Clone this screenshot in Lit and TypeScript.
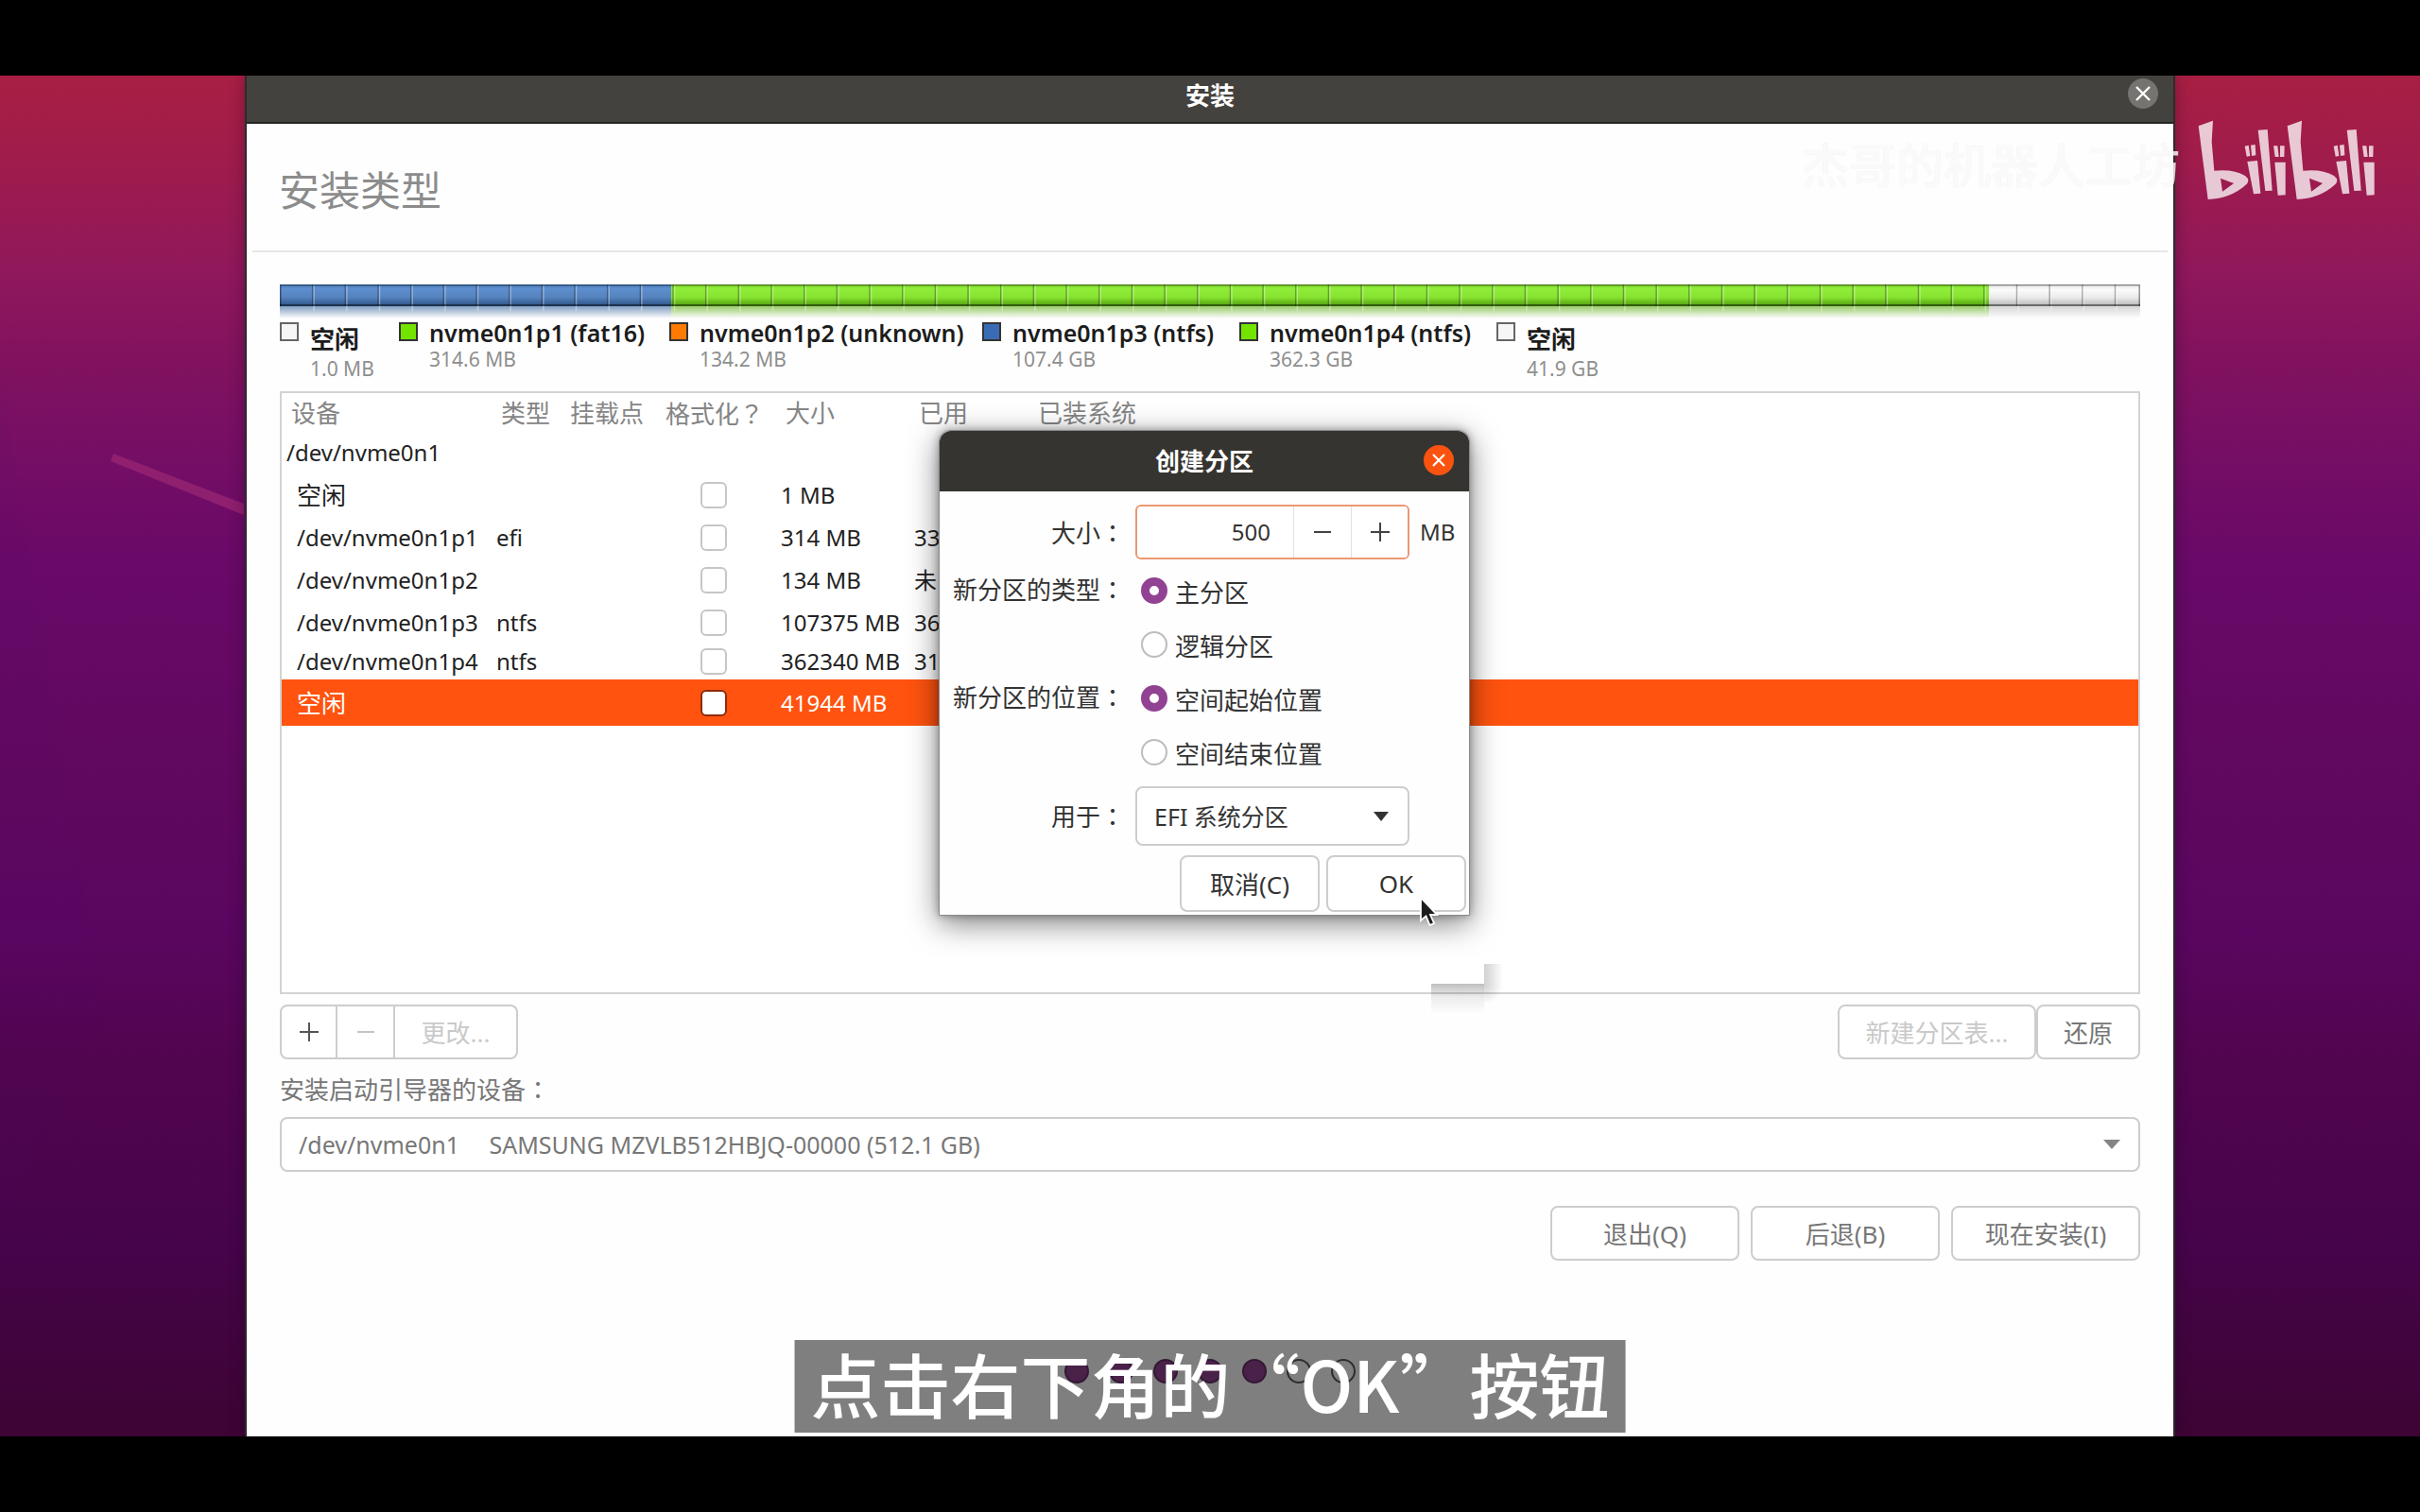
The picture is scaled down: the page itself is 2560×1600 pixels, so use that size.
import { LitElement, html, css, svg } from "lit";
import { customElement, state } from "lit/decorators.js";
import { classMap } from "lit/directives/class-map.js";

interface LegendEntry { name: string; size: string; tone: string; cjk?: boolean; }
interface Row { device: string; type?: string; size?: string; used?: string; kind: string; cjk?: boolean; }

const LEGEND: LegendEntry[] = [
  { name: "空闲", size: "1.0 MB", tone: "free", cjk: true },
  { name: "nvme0n1p1 (fat16)", size: "314.6 MB", tone: "green" },
  { name: "nvme0n1p2 (unknown)", size: "134.2 MB", tone: "orange" },
  { name: "nvme0n1p3 (ntfs)", size: "107.4 GB", tone: "blue" },
  { name: "nvme0n1p4 (ntfs)", size: "362.3 GB", tone: "green" },
  { name: "空闲", size: "41.9 GB", tone: "free", cjk: true },
];

const ROWS: Row[] = [
  { device: "/dev/nvme0n1", kind: "disk" },
  { device: "空闲", size: "1 MB", kind: "part", cjk: true },
  { device: "/dev/nvme0n1p1", type: "efi", size: "314 MB", used: "33", kind: "part" },
  { device: "/dev/nvme0n1p2", size: "134 MB", used: "未", kind: "part" },
  { device: "/dev/nvme0n1p3", type: "ntfs", size: "107375 MB", used: "36", kind: "part" },
  { device: "/dev/nvme0n1p4", type: "ntfs", size: "362340 MB", used: "31", kind: "part tight" },
  { device: "空闲", size: "41944 MB", kind: "part selected", cjk: true },
];

const base = css`
  :host {
    --latin: "Noto Sans", "Open Sans";
    --cjk: "Noto Sans CJK SC";
    font-family: var(--latin), var(--cjk), sans-serif;
    font-size: 24px;
    color: #333;
  }
  *, *::before, *::after { box-sizing: border-box; }
  .cjk { font-size: 26px; }
  .mark { font-family: "Noto Sans CJK TC", sans-serif; }
  button, input, select { font: inherit; color: inherit; margin: 0; }
  button, select {
    height: 58px;
    border: 2px solid #cdcdcd;
    border-radius: 8px;
    background: #fff;
    padding: 0;
  }
  button { font-size: 26px; }
  select { appearance: none; width: 100%; padding: 0 18px; display: block; font-size: 25px; }
  .combo { display: grid; align-items: center; }
  .combo > * { grid-area: 1 / 1; }
  .combo > svg { justify-self: end; margin-right: 21px; pointer-events: none; }
`;

/* Full-width punctuation centred in its em box. */
const mark = (text: string) => html`<span class="mark" lang="zh-TW">${text}</span>`;

@customElement("partition-bar")
export class PartitionBar extends LitElement {
  static styles = css`
    :host { display: block; }
    svg { display: block; width: 100%; height: 36px; }
  `;
  render() {
    const ticks = Array.from({ length: 56 }, (_, i) => (i + 1) * 34.67);
    return html`<svg viewBox="0 0 1968 36" preserveAspectRatio="none" aria-hidden="true">
      <defs>
        <linearGradient id="blue" x1="0" y1="0" x2="0" y2="1">
          <stop offset="0" stop-color="#4a7dbd" /><stop offset=".2" stop-color="#5e8fce" />
          <stop offset=".6" stop-color="#5482bd" /><stop offset="1" stop-color="#2b5183" />
        </linearGradient>
        <linearGradient id="green" x1="0" y1="0" x2="0" y2="1">
          <stop offset="0" stop-color="#7ed32a" /><stop offset=".2" stop-color="#90ee3a" />
          <stop offset=".6" stop-color="#86e22f" /><stop offset="1" stop-color="#4d9a0c" />
        </linearGradient>
        <linearGradient id="gray" x1="0" y1="0" x2="0" y2="1">
          <stop offset="0" stop-color="#e8e8e8" /><stop offset=".25" stop-color="#fbfbfb" />
          <stop offset=".6" stop-color="#eaeaea" /><stop offset="1" stop-color="#b4b4b4" />
        </linearGradient>
        <linearGradient id="fade" x1="0" y1="0" x2="0" y2="1">
          <stop offset="0" stop-color="#fefefe" stop-opacity=".3" /><stop offset="1" stop-color="#fefefe" />
        </linearGradient>
      </defs>
      <rect x="0" y="23" width="414" height="13" fill="#4b76a8" />
      <rect x="414" y="23" width="1394" height="13" fill="#6cb52c" />
      <rect x="1808" y="23" width="160" height="13" fill="#c4c4c4" />
      <rect x="0" y="23" width="1968" height="13" fill="url(#fade)" />
      <rect x="0" y="0" width="414" height="23" fill="url(#blue)" />
      <rect x="414" y="0" width="1394" height="23" fill="url(#green)" />
      <rect x="1808" y="0" width="160" height="23" fill="url(#gray)" />
      ${ticks.map((x) => svg`<path d=${`M${x} 0V23`} stroke="#000" stroke-opacity=".3" stroke-width="1.5" />
        <path d=${`M${x + 1.5} 1V28`} stroke="#fff" stroke-opacity=".35" stroke-width="1.5" />`)}
      <path d="M0 .75H1968M1967.2 0V23M.7 0V23" stroke="#000" stroke-opacity=".4" stroke-width="1.5" />
      <path d="M0 22H1968" stroke="#000" stroke-opacity=".42" stroke-width="2" />
    </svg>`;
  }
}

@customElement("create-partition-dialog")
export class CreatePartitionDialog extends LitElement {
  @state() private kind = "primary";
  @state() private place = "start";

  static styles = [base, css`
    :host { display: block; }
    .dialog {
      width: 562px;
      border: 1px solid #8a8a8a;
      border-radius: 12px 12px 0 0;
      background: #fefefe;
      box-shadow: 0 8px 32px rgba(0, 0, 0, 0.5), 0 0 8px rgba(0, 0, 0, 0.3);
    }
    .bar {
      height: 64px;
      display: grid;
      grid-template-columns: 48px 1fr 48px;
      align-items: center;
      background: #363430;
      border-radius: 12px 12px 0 0;
      color: #fff;
    }
    h2 { grid-column: 2; margin: 0; text-align: center; font-size: 26px; line-height: 40px; }
    .close {
      width: 32px; height: 32px; border: 0; border-radius: 16px; margin-bottom: 2px;
      background: #fa5310; padding: 0; display: grid; place-items: center;
    }
    .form {
      display: grid;
      grid-template-columns: 196px 290px 1fr;
      column-gap: 11px;
      align-items: center;
      padding-top: 14px;
      line-height: 40px;
    }
    .label { text-align: right; font-size: 26px; }
    .spin {
      display: grid;
      grid-template-columns: 1fr 61px 60px;
      height: 58px;
      border: 2px solid #eb9873;
      border-radius: 6px;
      background: #fff;
      overflow: hidden;
    }
    .spin input { border: 0; outline: 0; background: none; width: 100%; min-width: 0; text-align: right; padding: 0 24px 0 8px; }
    .spin button { height: auto; border: 0; border-left: 1px solid #e2e2e2; border-radius: 0; display: grid; place-items: center; }
    .radios { grid-column: 2 / 4; display: grid; grid-auto-rows: 57px; padding-left: 6px; }
    .group { align-self: start; height: 57px; line-height: 54px; }
    .radio { display: flex; align-items: center; gap: 8px; font-size: 26px; line-height: 50px; }
    .radio input {
      appearance: none; width: 28px; height: 28px; border-radius: 14px;
      border: 2px solid #bdbdbd; background: #fff; flex: none;
    }
    .radio input:checked { border: 9px solid #924293; }
    .radio span { padding-top: 4px; }
    .first { margin-top: 4px; }
    .last { margin-top: 8px; }
    .use select { height: 63px; padding-left: 18px; }
    .actions { display: flex; justify-content: flex-end; gap: 7px; padding: 10px 3px 3px; }
    .actions button { width: 148px; height: 60px; }
  `];

  render() {
    return html`<section class="dialog" role="dialog" aria-labelledby="dlg-title">
      <header class="bar">
        <h2 id="dlg-title">创建分区</h2>
        <button class="close" aria-label="关闭">
          <svg width="16" height="16" viewBox="0 0 16 16"><path d="M2 2L14 14M14 2L2 14" stroke="#fff" stroke-width="2.2" /></svg>
        </button>
      </header>
      <div class="form">
        <label class="label" for="size">大小${mark("：")}</label>
        <div class="spin">
          <input id="size" type="text" inputmode="numeric" value="500" />
          <button aria-label="减少"><svg width="20" height="20" viewBox="0 0 20 20"><path d="M1 10H19" stroke="#444" stroke-width="2" /></svg></button>
          <button aria-label="增加"><svg width="20" height="20" viewBox="0 0 20 20"><path d="M0 10H20M10 0V20" stroke="#444" stroke-width="2" /></svg></button>
        </div>
        <span>MB</span>
        <div class="label group first" id="kind">新分区的类型${mark("：")}</div>
        <div class="radios first" role="radiogroup" aria-labelledby="kind">
          ${this.radio("kind", "primary", "主分区", this.kind, (v) => (this.kind = v))}
          ${this.radio("kind", "logical", "逻辑分区", this.kind, (v) => (this.kind = v))}
        </div>
        <div class="label group" id="place">新分区的位置${mark("：")}</div>
        <div class="radios" role="radiogroup" aria-labelledby="place">
          ${this.radio("place", "start", "空间起始位置", this.place, (v) => (this.place = v))}
          ${this.radio("place", "end", "空间结束位置", this.place, (v) => (this.place = v))}
        </div>
        <label class="label last" for="use">用于${mark("：")}</label>
        <div class="combo use last">
          <select id="use"><option>EFI 系统分区</option></select>
          <svg width="18" height="10" viewBox="0 0 18 10"><path d="M1 0H17L9 10Z" fill="#333" /></svg>
        </div>
      </div>
      <div class="actions">
        <button>取消(C)</button>
        <button>OK</button>
      </div>
    </section>`;
  }

  private radio(name: string, value: string, text: string, current: string, pick: (v: string) => void) {
    return html`<label class="radio">
      <input type="radio" name=${name} .checked=${current === value} @change=${() => pick(value)} />
      <span>${text}</span>
    </label>`;
  }
}

@customElement("app-root")
export class AppRoot extends LitElement {
  static styles = [base, css`
    :host { display: block; }
    .screen { min-height: 100vh; display: flex; flex-direction: column; background: #000; padding: 80px 0; }
    .stage {
      flex: 1;
      display: flex;
      position: relative;
      overflow: hidden;
      background: linear-gradient(180deg, #a91f43 0%, #a01c4b 6%, #91185b 14%, #81125f 21%, #750e65 28%, #690968 36%, #60085f 52%, #5a0660 63%, #52054f 72%, #46044a 86%, #3d0433 100%);
    }
    .scenery { position: absolute; left: 0; top: 0; }
    .window {
      flex: 1;
      position: relative;
      margin: 0 259px;
      display: flex;
      flex-direction: column;
      background: #fefefe;
      border: 2px solid #2d2a2d;
      border-width: 0 2px;
      box-shadow: 0 0 16px rgba(20, 0, 30, 0.35);
    }
    .titlebar {
      height: 51px;
      display: grid;
      grid-template-columns: 48px 1fr 48px;
      align-items: center;
      background: #44423e;
      border-bottom: 2px solid #252422;
      padding-bottom: 7px;
      color: #fff;
    }
    .titlebar h1 { grid-column: 2; margin: 0; text-align: center; font-size: 26px; line-height: 40px; }
    .close {
      width: 32px; height: 32px; border: 0; border-radius: 16px; margin-bottom: 5px;
      background: #757471; padding: 0; display: grid; place-items: center;
    }
    .heading {
      height: 136px;
      margin: 0 6px;
      padding: 8px 28px 0;
      border-bottom: 2px solid #e6e6e6;
      display: flex;
      align-items: center;
    }
    .heading h2 { margin: 0; font-weight: 400; font-size: 43px; line-height: 60px; color: #8c8c8c; }
    .body { flex: 1; display: flex; flex-direction: column; padding: 34px 35px 0; color: #777; }
    .legend {
      list-style: none; margin: 0; padding: 4px 0 0; height: 77px;
      display: grid; grid-template-columns: 126px 286px 331px 272px 272px auto;
      justify-content: start;
    }
    .legend li { display: flex; gap: 12px; }
    .swatch { width: 20px; height: 20px; border: 2px solid #333; flex: none; }
    .free { background: #f6f6f6; border-color: #666; }
    .green { background: #73e400; }
    .orange { background: #ff7a00; }
    .blue { background: #3a6cb5; }
    .name { font-weight: 600; font-size: 25px; line-height: 22px; color: #1c1c1c; white-space: nowrap; }
    .name.cjk { font-size: 26px; line-height: 36px; }
    .amount { font-size: 21px; line-height: 34px; color: #8f8f8f; }
    .name.cjk + .amount { line-height: 26px; }
    .list { flex: 1; border: 2px solid #d3d3d3; background: #fff; color: #222; }
    table { width: 100%; table-layout: fixed; border-collapse: collapse; }
    th, td { padding: 0 0 0 5px; text-align: left; white-space: nowrap; line-height: 36px; height: 45px; }
    th { padding: 2px 0 0 10px; height: 40px; font-weight: 400; font-size: 26px; color: #858585; }
    .c1 { width: 222px; } .c2 { width: 73px; } .c3 { width: 101px; }
    .c4 { width: 127px; } .c5 { width: 141px; } .c6 { width: 126px; }
    .part td:first-child { padding-left: 16px; }
    .tight td { height: 38px; }
    .selected td { height: 49px; background: #ff530f; color: #fff; }
    td.tick { padding: 0 5px 0 0; }
    .tick input {
      appearance: none; display: block; margin: 0 auto; width: 28px; height: 28px;
      border: 2px solid #c6c6c6; border-radius: 6px; background: #fff;
    }
    .selected .tick input { border-color: #8c2c0c; }
    .tools { display: flex; margin-top: 11px; }
    .tools .spacer { flex: 1; }
    .joined { display: flex; }
    .joined button { border-radius: 0; border-left-width: 0; }
    .joined button:first-child { border-radius: 8px 0 0 8px; border-left-width: 2px; }
    .joined button:last-child { border-radius: 0 8px 8px 0; }
    .joined svg { display: block; margin: 0 auto; }
    .w-icon { width: 61px; } .w-edit { width: 130px; } .w-table { width: 210px; } .w-undo { width: 110px; }
    .tools button:disabled { color: #c9c9c9; }
    .boot { font-size: 26px; line-height: 61px; height: 61px; }
    .footer { display: flex; justify-content: flex-end; gap: 12px; margin-top: 36px; }
    .footer button { width: 200px; }
    .dots { display: flex; justify-content: center; gap: 21px; padding: 104px 0 56px; }
    .dot { width: 26px; height: 26px; border-radius: 13px; border: 2px solid #5c5c5c; }
    .dot.on { background: #944292; border-color: #66306a; }
    .dialog { position: absolute; top: 375px; left: calc(50% - 287px); }
    .ghost { position: absolute; left: calc(50% + 232px); top: 938px; }
    .cursor { position: absolute; left: calc(50% + 221px); top: 868px; }
    .brand {
      position: absolute; right: 45px; top: 45px;
      display: flex; align-items: center; gap: 17px;
    }
    .author {
      font-size: 50px; line-height: 70px; font-weight: 500; color: rgba(255, 255, 255, 0.8);
      text-shadow: 0 0 1px rgba(0, 0, 0, 0.1); padding-top: 12px;
    }
    .caption {
      position: absolute; left: 50%; bottom: 4px; transform: translateX(-50%);
      margin: 0; padding: 0 17px 8px; background: rgba(0, 0, 0, 0.5); color: #fff; font-weight: 500;
      font-family: var(--cjk), sans-serif; font-size: 74px; line-height: 90px; white-space: nowrap;
    }
  `];

  render() {
    return html`<div class="screen"><div class="stage">
      <svg class="scenery" width="260" height="1440" viewBox="0 0 260 1440" aria-hidden="true">
        <path d="M0 320L110 1000L0 1200Z" fill="#4a0a78" fill-opacity=".05" />
        <path d="M120 400L258 453V465L117 408Z" fill="#9a2673" fill-opacity=".75" />
      </svg>
      <main class="window" lang="zh-CN">
        <header class="titlebar">
          <h1>安装</h1>
          <button class="close" aria-label="关闭">
            <svg width="16" height="16" viewBox="0 0 16 16"><path d="M1 1L15 15M15 1L1 15" stroke="#fff" stroke-width="2.4" /></svg>
          </button>
        </header>
        <div class="heading"><h2>安装类型</h2></div>
        <div class="body">
          <partition-bar></partition-bar>
          <ul class="legend">
            ${LEGEND.map((e) => html`<li>
              <span class="swatch ${e.tone}"></span>
              <div>
                <div class=${classMap({ name: true, cjk: !!e.cjk })}>${e.name}</div>
                <div class="amount">${e.size}</div>
              </div>
            </li>`)}
          </ul>
          <div class="list">
            <table>
              <colgroup><col class="c1" /><col class="c2" /><col class="c3" /><col class="c4" /><col class="c5" /><col class="c6" /><col /></colgroup>
              <thead><tr>
                <th>设备</th><th>类型</th><th>挂载点</th><th>格式化${mark("？")}</th><th>大小</th><th>已用</th><th>已装系统</th>
              </tr></thead>
              <tbody>
                ${ROWS.map((r) => html`<tr class=${r.kind}>
                  <td class=${r.cjk ? "cjk" : ""}>${r.device}</td>
                  <td>${r.type}</td>
                  <td></td>
                  <td class="tick">${r.size ? html`<input type="checkbox" aria-label=${"格式化 " + r.device} />` : ""}</td>
                  <td>${r.size}</td>
                  <td>${r.used}</td>
                  <td></td>
                </tr>`)}
              </tbody>
            </table>
          </div>
          <div class="tools">
            <div class="joined">
              <button class="w-icon" aria-label="添加"><svg width="20" height="20" viewBox="0 0 20 20"><path d="M0 10H20M10 0V20" stroke="#555" stroke-width="2" /></svg></button>
              <button class="w-icon" aria-label="删除" disabled><svg width="18" height="20" viewBox="0 0 18 20"><path d="M0 10H18" stroke="#c4c4c4" stroke-width="2" /></svg></button>
              <button class="w-edit" disabled>更改...</button>
            </div>
            <span class="spacer"></span>
            <button class="w-table" disabled>新建分区表...</button>
            <button class="w-undo">还原</button>
          </div>
          <label class="boot" for="boot">安装启动引导器的设备${mark("：")}</label>
          <div class="combo">
            <select id="boot"><option>/dev/nvme0n1\u2003\u00a0SAMSUNG MZVLB512HBJQ-00000 (512.1 GB)</option></select>
            <svg width="18" height="10" viewBox="0 0 18 10"><path d="M0 0H18L9 10Z" fill="#858585" /></svg>
          </div>
          <div class="footer">
            <button>退出(Q)</button>
            <button>后退(B)</button>
            <button>现在安装(I)</button>
          </div>
          <div class="dots">
            ${[1, 1, 1, 1, 1, 0, 0].map((on) => html`<span class=${classMap({ dot: true, on: !!on })}></span>`)}
          </div>
        </div>
      </main>
      <svg class="ghost" width="84" height="64" viewBox="0 0 84 64" aria-hidden="true">
        <defs>
          <linearGradient id="down" x1="0" y1="0" x2="0" y2="1"><stop offset="0" stop-opacity=".25" /><stop offset=".45" stop-opacity=".07" /><stop offset="1" stop-opacity="0" /></linearGradient>
          <linearGradient id="side" x1="0" y1="0" x2="1" y2="0"><stop offset="0" stop-opacity=".18" /><stop offset="1" stop-opacity="0" /></linearGradient>
          <radialGradient id="corner" gradientUnits="userSpaceOnUse" cx="58" cy="24" r="20"><stop offset="0" stop-opacity=".18" /><stop offset="1" stop-opacity="0" /></radialGradient>
        </defs>
        <rect x="2" y="23" width="56" height="32" fill="url(#down)" />
        <rect x="58" y="2" width="20" height="21" fill="url(#side)" />
        <rect x="58" y="23" width="24" height="38" fill="url(#corner)" />
      </svg>
      <create-partition-dialog class="dialog" lang="zh-CN"></create-partition-dialog>
      <svg class="cursor" width="22" height="34" viewBox="0 0 22 34" aria-hidden="true">
        <path d="M2 2V26L7.5 21.5L11.5 31L16 29L12 20H19Z" fill="#1d1d1d" stroke="#fff" stroke-width="1.8" />
      </svg>
      <div class="brand" lang="zh-CN">
        <span class="author">杰哥的机器人工坊</span>
        <svg width="192" height="88" viewBox="70 45 576 264" role="img" aria-label="bilibili">
          <g fill="#fff" fill-opacity=".76" fill-rule="evenodd">
            ${[0, 282].map((dx) => svg`<g transform=${`translate(${dx} 0)`}>
              <path d="M78 70L124 53L120 120L128 212Q190 206 226 228Q246 243 226 259Q180 300 108 303Z M148 236L154 278L190 252Z" />
              <path d="M233 183L265 180L275 284L253 286Z" />
              <path d="M225 134L237 131L242 165L231 167Z M244 131L258 129L260 163L247 165Z" />
              <path d="M267 83L297 81L312 275L290 276Z" />
              <path d="M320 185L354 185L354 289L330 290Z" />
              <path d="M316 133L329 133L333 168L321 168Z M337 133L351 133L350 168L337 168Z" />
            </g>`)}
          </g>
        </svg>
      </div>
      <p class="caption" lang="zh-CN">点击右下角的“OK”按钮</p>
    </div></div>`;
  }
}
